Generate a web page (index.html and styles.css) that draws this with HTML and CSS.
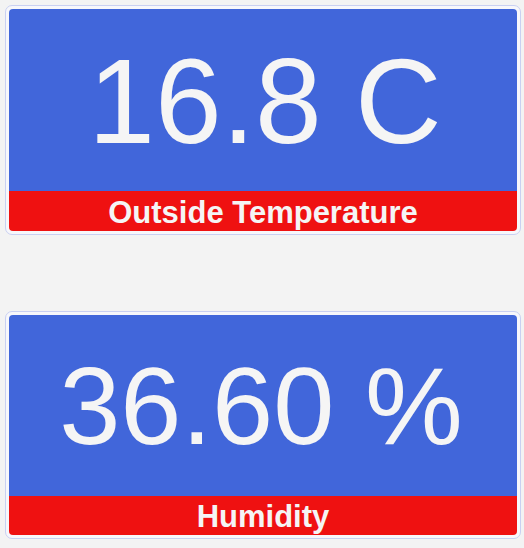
FILE: index.html
```html
<!DOCTYPE html>
<html>
<head>
<meta charset="utf-8">
<link rel="stylesheet" href="styles.css">
</head>
<body>
<div class="stack">
  <div class="card">
    <div class="card-inner">
      <div class="value value-temp">16.8 C</div>
      <div class="label">Outside Temperature</div>
    </div>
  </div>
  <div class="card card-second">
    <div class="card-inner">
      <div class="value value-hum">36.60 %</div>
      <div class="label label-second">Humidity</div>
    </div>
  </div>
</div>
</body>
</html>
```

FILE: styles.css
```css
html, body {
  margin: 0;
  padding: 0;
  background: #f3f3f3;
}
body {
  font-family: "Liberation Sans", Arial, sans-serif;
  width: 524px;
  height: 548px;
  overflow: hidden;
}
.stack {
  display: flex;
  flex-direction: column;
  gap: 76px;
  padding: 5px 0 0 5px;
}
.card {
  width: 516px;
  box-sizing: border-box;
  border: 1px solid #c9d0f2;
  border-radius: 7px;
  padding: 3px;
  background: #f7f7fb;
}
.card-inner {
  border-radius: 4px;
  overflow: hidden;
  display: flex;
  flex-direction: column;
}
.value {
  height: 182px;
  background: #4166da;
  color: #f5f5f5;
  display: flex;
  align-items: center;
  justify-content: center;
  line-height: 1;
  white-space: nowrap;
}
.value-temp {
  font-size: 120px;
  padding-top: 2px;
  padding-left: 4px;
  box-sizing: border-box;
}
.value-hum {
  font-size: 110px;
  height: 181px;
  box-sizing: border-box;
  padding-right: 4px;
}
.label {
  height: 40px;
  box-sizing: border-box;
  padding-top: 2px;
  background: #ef1111;
  color: #f5f5f5;
  font-weight: bold;
  font-size: 31px;
  display: flex;
  align-items: center;
  justify-content: center;
  line-height: 1;
}
.label-second {
  height: 39px;
}
```
